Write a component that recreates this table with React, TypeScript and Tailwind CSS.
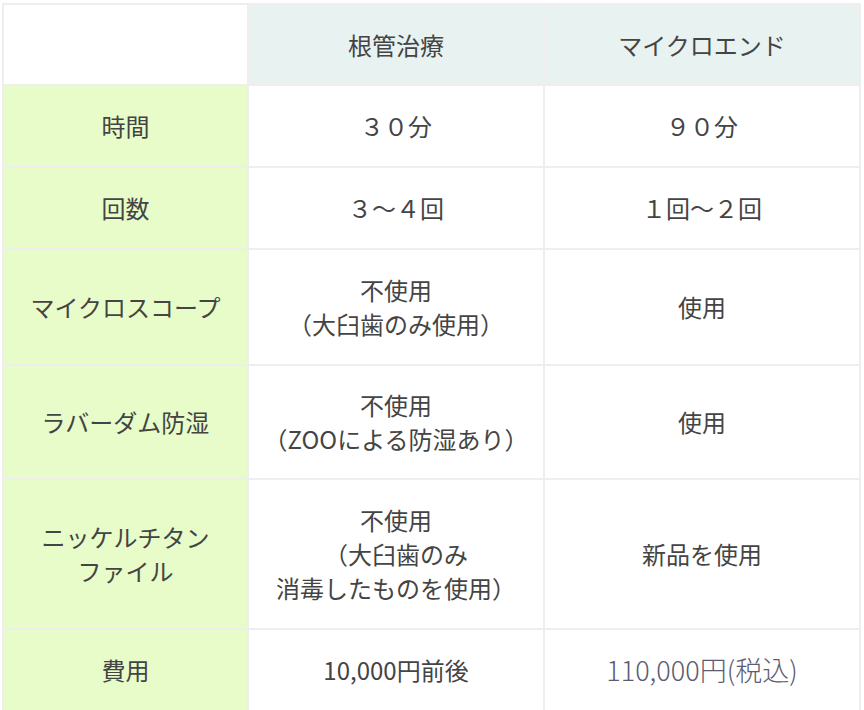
const rows: { label: string[]; a: string[]; b: string[]; light?: boolean; tight?: boolean }[] = [
  { label: ["時間"], a: ["３０分"], b: ["９０分"] },
  { label: ["回数"], a: ["３～４回"], b: ["１回～２回"] },
  { label: ["マイクロスコープ"], a: ["不使用", "（大臼歯のみ使用）"], b: ["使用"] },
  { label: ["ラバーダム防湿"], a: ["不使用", "（ZOOによる防湿あり）"], b: ["使用"], tight: true },
  {
    label: ["ニッケルチタン", "ファイル"],
    a: ["不使用", "（大臼歯のみ", "消毒したものを使用）"],
    b: ["新品を使用"],
  },
  { label: ["費用"], a: ["10,000円前後"], b: ["110,000円(税込)"], light: true },
];

function Lines({ lines }: { lines: string[] }) {
  return (
    <>
      {lines.map((l, i) => (
        <div key={i}>{l}</div>
      ))}
    </>
  );
}

export default function App() {
  return (
    <div
      className="w-[864px] h-[710px] overflow-hidden bg-white pl-[2px] pt-[3px] text-[#444] text-[24px] leading-[34px]"
      style={{ fontFamily: '"Noto Sans CJK JP", "Noto Sans", sans-serif' }}
    >
      <table className="w-[859px] border-collapse border-2 border-[#eeeeee] text-center table-fixed">
        <colgroup>
          <col className="w-[245px]" />
          <col className="w-[296px]" />
          <col />
        </colgroup>
        <thead>
          <tr className="h-[81px]">
            <th className="border-2 border-[#eeeeee] bg-white font-normal"></th>
            <th className="border-2 border-[#eeeeee] bg-[#e8f2f0] font-normal">根管治療</th>
            <th className="border-2 border-[#eeeeee] bg-[#e8f2f0] font-normal">マイクロエンド</th>
          </tr>
        </thead>
        <tbody>
          {rows.map((r, i) => {
            const pad = r.tight ? "py-[22px]" : "py-[23px]";
            return (
              <tr key={i}>
                <td className={`border-2 border-[#eeeeee] bg-[#e7fcc8] align-middle ${pad}`}>
                  <Lines lines={r.label} />
                </td>
                <td className={`border-2 border-[#eeeeee] bg-white align-middle ${pad}`}>
                  <Lines lines={r.a} />
                </td>
                <td
                  className={`border-2 border-[#eeeeee] bg-white align-middle ${pad} ${
                    r.light ? "font-light text-[27px] text-[#5b5c70]" : ""
                  }`}
                >
                  <Lines lines={r.b} />
                </td>
              </tr>
            );
          })}
        </tbody>
      </table>
    </div>
  );
}
